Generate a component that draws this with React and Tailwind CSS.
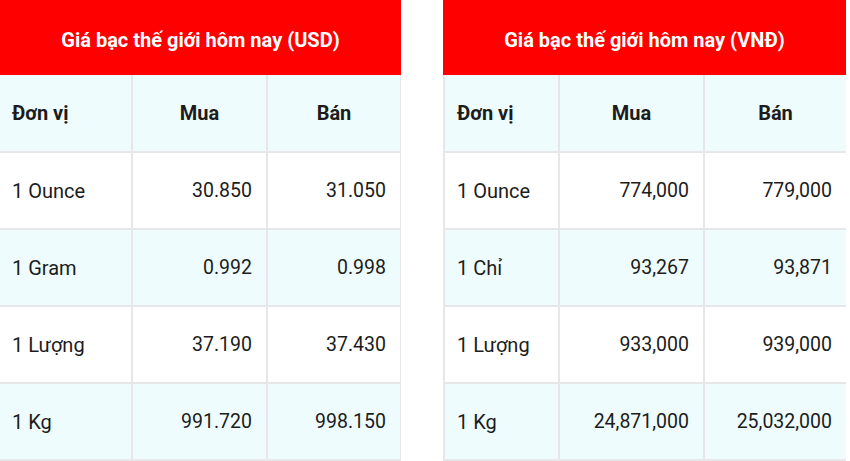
import React from "react";

const usd = {
  title: "Giá bạc thế giới hôm nay (USD)",
  cols: "grid-cols-[131px_133px_132px]",
  rows: [
    ["1 Ounce", "30.850", "31.050"],
    ["1 Gram", "0.992", "0.998"],
    ["1 Lượng", "37.190", "37.430"],
    ["1 Kg", "991.720", "998.150"],
  ],
};

const vnd = {
  title: "Giá bạc thế giới hôm nay (VNĐ)",
  cols: "grid-cols-[113px_143px_141px]",
  rows: [
    ["1 Ounce", "774,000", "779,000"],
    ["1 Chỉ", "93,267", "93,871"],
    ["1 Lượng", "933,000", "939,000"],
    ["1 Kg", "24,871,000", "25,032,000"],
  ],
};

const PriceTable = ({ data, first }) => {
  return (
    <div className={first ? "w-[401px]" : "w-[403px]"}>
      <div className="h-[75px] bg-[#fe0000] flex items-center justify-center text-white text-[20px] font-bold pt-[4px]">
        {data.title}
      </div>
      <div
        className={`grid ${data.cols} gap-[2px] bg-[#e7e7ea] pb-[2px] pr-[2px] ${
          first ? "" : "pl-[2px]"
        }`}
      >
        <div className="h-[76px] bg-[#effcfd] flex items-center pl-3 font-bold text-[20px]">Đơn vị</div>
        <div className="h-[76px] bg-[#effcfd] flex items-center justify-center font-bold text-[20px]">Mua</div>
        <div className="h-[76px] bg-[#effcfd] flex items-center justify-center font-bold text-[20px]">Bán</div>
        {data.rows.map((row, i) => {
          const bg = i % 2 === 0 ? "bg-white" : "bg-[#effcfd]";
          return (
            <React.Fragment key={row[0]}>
              <div className={`h-[75px] ${bg} flex items-center pl-3 text-[20px]`}>{row[0]}</div>
              <div className={`h-[75px] ${bg} flex items-center justify-end pr-[14px] text-[19.5px]`}>{row[1]}</div>
              <div className={`h-[75px] ${bg} flex items-center justify-end pr-[14px] text-[19.5px]`}>{row[2]}</div>
            </React.Fragment>
          );
        })}
      </div>
    </div>
  );
};

export default function App() {
  return (
    <div
      className="w-[850px] h-[461px] bg-white flex overflow-hidden text-[#1c1c1c]"
      style={{ fontFamily: "Roboto, 'Noto Sans', sans-serif" }}
    >
      <PriceTable data={usd} first />
      <div className="w-[42px]" />
      <PriceTable data={vnd} />
    </div>
  );
}
